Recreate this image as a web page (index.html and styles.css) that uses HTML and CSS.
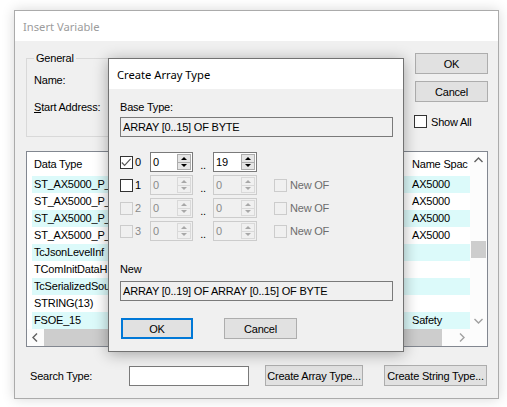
FILE: index.html
```html
<!DOCTYPE html>
<html>
<head>
<meta charset="utf-8">
<link rel="stylesheet" href="styles.css">
</head>
<body>
<div class="win outer">
  <div class="titlebar">Insert Variable</div>
  <div class="obody">
    <div class="top">
      <fieldset class="group">
        <legend>General</legend>
        <div class="field f1">Name:</div>
        <div class="field f2"><u>S</u>tart Address:</div>
      </fieldset>
      <div class="side">
        <button class="btn">OK</button>
        <button class="btn b2">Cancel</button>
        <div class="showall"><span class="cb"></span><span>Show All</span></div>
      </div>
    </div>
    <div class="list">
      <div class="content">
        <div class="row head"><span class="c1">Data Type</span><span class="c2">Name Spac</span></div>
        <div class="row alt"><span class="c1">ST_AX5000_P_</span><span class="c2">AX5000</span></div>
        <div class="row"><span class="c1">ST_AX5000_P_</span><span class="c2">AX5000</span></div>
        <div class="row alt"><span class="c1">ST_AX5000_P_</span><span class="c2">AX5000</span></div>
        <div class="row"><span class="c1">ST_AX5000_P_</span><span class="c2">AX5000</span></div>
        <div class="row alt"><span class="c1">TcJsonLevelInf</span><span class="c2"></span></div>
        <div class="row"><span class="c1">TComInitDataH</span><span class="c2"></span></div>
        <div class="row alt"><span class="c1">TcSerializedSou</span><span class="c2"></span></div>
        <div class="row"><span class="c1">STRING(13)</span><span class="c2"></span></div>
        <div class="row alt"><span class="c1">FSOE_15</span><span class="c2">Safety</span></div>
      </div>
      <div class="vscroll">
        <div class="sarrow"><svg width="17" height="17" viewBox="0 0 17 17"><polyline points="4.5,10 8.5,6 12.5,10" fill="none" stroke="#606060" stroke-width="1.4"/></svg></div>
        <div class="vtrack"><div class="vthumb"></div></div>
        <div class="sarrow"><svg width="17" height="17" viewBox="0 0 17 17"><polyline points="4.5,7 8.5,11 12.5,7" fill="none" stroke="#a0a0a0" stroke-width="1.4"/></svg></div>
      </div>
      <div class="hscroll">
        <div class="sarrow"><svg width="17" height="17" viewBox="0 0 17 17"><polyline points="10,4.5 6,8.5 10,12.5" fill="none" stroke="#606060" stroke-width="1.4"/></svg></div>
        <div class="htrack"><div class="hthumb"></div></div>
        <div class="sarrow"><svg width="17" height="17" viewBox="0 0 17 17"><polyline points="7,4.5 11,8.5 7,12.5" fill="none" stroke="#a0a0a0" stroke-width="1.4"/></svg></div>
      </div>
      <div class="corner"></div>
    </div>
    <div class="search">
      <span class="slabel">Search Type:</span>
      <span class="sinput"></span>
      <button class="btn">Create Array Type...</button>
      <span></span>
      <button class="btn">Create String Type...</button>
    </div>
  </div>
</div>

<div class="win inner">
  <div class="titlebar">Create Array Type</div>
  <div class="ibody">
    <div class="lbl">Base Type:</div>
    <div class="tb">ARRAY [0..15] OF BYTE</div>
    <div class="dims">
      <div class="dim">
        <span class="cb"><svg width="11" height="11" viewBox="0 0 11 11"><polyline points="0.8,5.5 3.6,8.4 9.6,1.8" fill="none" stroke="#555" stroke-width="1.1"/></svg></span>
        <span class="idx">0</span>
        <div class="spin"><span class="v">0</span><span class="arr"><span class="up"><i></i></span><span class="dn"><i></i></span></span></div>
        <span class="dots">..</span>
        <div class="spin s2"><span class="v">19</span><span class="arr"><span class="up"><i></i></span><span class="dn"><i></i></span></span></div>
      </div>
      <div class="dim">
        <span class="cb"></span>
        <span class="idx">1</span>
        <div class="spin dis"><span class="v">0</span><span class="arr"><span class="up"><i></i></span><span class="dn"><i></i></span></span></div>
        <span class="dots">..</span>
        <div class="spin s2 dis"><span class="v">0</span><span class="arr"><span class="up"><i></i></span><span class="dn"><i></i></span></span></div>
        <span class="cb dis nof"></span><span class="noft">New OF</span>
      </div>
      <div class="dim">
        <span class="cb dis"></span>
        <span class="idx dis">2</span>
        <div class="spin dis"><span class="v">0</span><span class="arr"><span class="up"><i></i></span><span class="dn"><i></i></span></span></div>
        <span class="dots">..</span>
        <div class="spin s2 dis"><span class="v">0</span><span class="arr"><span class="up"><i></i></span><span class="dn"><i></i></span></span></div>
        <span class="cb dis nof"></span><span class="noft">New OF</span>
      </div>
      <div class="dim">
        <span class="cb dis"></span>
        <span class="idx dis">3</span>
        <div class="spin dis"><span class="v">0</span><span class="arr"><span class="up"><i></i></span><span class="dn"><i></i></span></span></div>
        <span class="dots">..</span>
        <div class="spin s2 dis"><span class="v">0</span><span class="arr"><span class="up"><i></i></span><span class="dn"><i></i></span></span></div>
        <span class="cb dis nof"></span><span class="noft">New OF</span>
      </div>
    </div>
    <div class="lbl newl">New</div>
    <div class="tb">ARRAY [0..19] OF ARRAY [0..15] OF BYTE</div>
    <div class="ibtns">
      <button class="btn def">OK</button>
      <button class="btn cancel">Cancel</button>
    </div>
  </div>
</div>
</body>
</html>
```

FILE: styles.css
```css
* { box-sizing: border-box; }
html, body { margin: 0; padding: 0; }
body {
  width: 507px;
  height: 407px;
  background: #ffffff;
  position: relative;
  overflow: hidden;
  font-family: "Liberation Sans", Arial, sans-serif;
  font-size: 11px;
  letter-spacing: -0.2px;
  color: #000;
}

.win {
  position: absolute;
  display: flex;
  flex-direction: column;
  background: #f0f0f0;
}
.outer {
  left: 14px;
  top: 10px;
  width: 485px;
  height: 389px;
  border: 1px solid #ababab;
  box-shadow: 0 0 12px rgba(0, 0, 0, 0.16);
}
.inner {
  left: 108px;
  top: 58px;
  width: 296px;
  height: 294px;
  border: 1px solid #727272;
  box-shadow: 0 2px 14px rgba(0, 0, 0, 0.32);
}
.titlebar {
  flex: none;
  height: 30px;
  background: #fff;
  display: flex;
  align-items: center;
  padding-left: 8px;
  font-family: "Noto Sans", sans-serif;
  font-size: 11.2px;
  letter-spacing: 0;
}
.outer .titlebar { color: #9c9c9c; }

.btn {
  height: 21px;
  margin: 0;
  padding: 0;
  border: 1px solid #adadad;
  background: #e1e1e1;
  font-family: inherit;
  font-size: 11px;
  letter-spacing: -0.2px;
  color: #000;
  display: flex;
  align-items: center;
  justify-content: center;
}

.obody {
  flex: 1;
  display: flex;
  flex-direction: column;
  padding: 12px 10px 0 11px;
}
.top {
  display: flex;
  align-items: flex-start;
}
.group {
  flex: 1;
  margin: -1px 14px 0 0;
  padding: 0 12px 22px 7px;
  border: 1px solid #d9d9d9;
  min-width: 0;
}
.group legend {
  padding: 0 2px;
  line-height: 13px;
}
.field { line-height: 13px; }
.f1 { margin-top: 9px; }
.f2 { margin-top: 14px; }

.side {
  width: 73px;
  display: flex;
  flex-direction: column;
}
.side .b2 { margin-top: 7px; }
.showall {
  margin-top: 13px;
  margin-left: -1px;
  display: flex;
  align-items: center;
}
.showall span:last-child { margin-left: 4px; }

.cb {
  width: 13px;
  height: 13px;
  flex: none;
  border: 1px solid #333;
  background: #fff;
  display: flex;
  align-items: center;
  justify-content: center;
}
.cb.dis { border-color: #cccccc; background: transparent; }

.list {
  margin-top: 14px;
  height: 196px;
  border: 1px solid #828790;
  background: #fff;
  display: grid;
  grid-template-columns: 1fr 17px;
  grid-template-rows: 1fr 17px;
}
.content {
  overflow: hidden;
  padding-left: 5px;
}
.row {
  display: flex;
  height: 17px;
  line-height: 17px;
  white-space: nowrap;
}
.row.head { height: 24px; line-height: 24px; }
.row.alt { background: #dcfafa; }
.c1 { width: 380px; flex: none; padding-left: 2px; overflow: hidden; }
.c2 { flex: none; }

.vscroll, .hscroll { display: flex; background: #fcfcfc; }
.vscroll { flex-direction: column; }
.sarrow { width: 17px; height: 17px; flex: none; }
.sarrow svg { display: block; }
.vtrack { flex: 1; }
.vthumb { margin-top: 72px; height: 17px; background: #cdcdcd; margin-left: 1px; margin-right: 1px; }
.htrack { flex: 1; }
.hthumb { width: 398px; height: 100%; background: #cdcdcd; }
.corner { background: #fcfcfc; }

.search {
  margin-top: 18px;
  display: grid;
  grid-template-columns: 103px 120px 16px 98px 21px 103px;
  align-items: center;
  height: 21px;
}
.search > .btn:nth-of-type(1) { grid-column: 4; }
.slabel { padding-left: 4px; }
.sinput {
  height: 20px;
  border: 1px solid #7a7a7a;
  background: #fff;
  grid-column: 2;
}

.ibody {
  flex: 1;
  display: flex;
  flex-direction: column;
  padding: 12px 10px 0 11px;
}
.lbl { line-height: 13px; }
.tb {
  margin-top: 3px;
  height: 20px;
  line-height: 18px;
  border: 1px solid #7a7a7a;
  background: #f0f0f0;
  padding-left: 2px;
  white-space: nowrap;
}
.dims {
  margin-top: 15px;
  display: flex;
  flex-direction: column;
  gap: 3px;
}
.dim {
  display: flex;
  align-items: center;
  height: 20px;
}
.idx { width: 17px; padding-left: 2px; }
.idx.dis { color: #8a8a8a; }
.spin {
  width: 43px;
  height: 20px;
  border: 1px solid #7a7a7a;
  background: #fff;
  display: flex;
}
.spin.s2 { width: 44px; }
.spin .v { flex: 1; padding-left: 2px; line-height: 18px; }
.spin .arr {
  width: 14px;
  margin: 1px 1px 1px 0;
  display: flex;
  flex-direction: column;
}
.spin .up, .spin .dn {
  flex: 1;
  border: 1px solid #acacac;
  background: #e5e5e5;
  display: flex;
  align-items: center;
  justify-content: center;
}
.spin .dn { border-top: none; }
.spin .up i {
  width: 0; height: 0;
  border-left: 3px solid transparent;
  border-right: 3px solid transparent;
  border-bottom: 3px solid #000;
}
.spin .dn i {
  width: 0; height: 0;
  border-left: 3px solid transparent;
  border-right: 3px solid transparent;
  border-top: 3px solid #000;
}
.spin.dis { border-color: #cccccc; background: #f0f0f0; }
.spin.dis .v { color: #8a8a8a; }
.spin.dis .up, .spin.dis .dn { border-color: #d9d9d9; background: #f0f0f0; }
.spin.dis .up i { border-bottom-color: #a8a8a8; }
.spin.dis .dn i { border-top-color: #a8a8a8; }
.dots {
  width: 20px;
  text-align: center;
  align-self: flex-end;
  line-height: 13px;
}
.nof { margin-left: 17px; }
.noft { margin-left: 3px; color: #6d6d6d; }

.newl { margin-top: 22px; }
.newl + .tb { margin-top: 5px; }

.ibtns {
  margin-top: 17px;
  display: flex;
}
.ibtns .def {
  margin-left: 1px;
  width: 72px;
  border: 2px solid #0078d7;
}
.ibtns .cancel {
  margin-left: 31px;
  width: 73px;
}
```
